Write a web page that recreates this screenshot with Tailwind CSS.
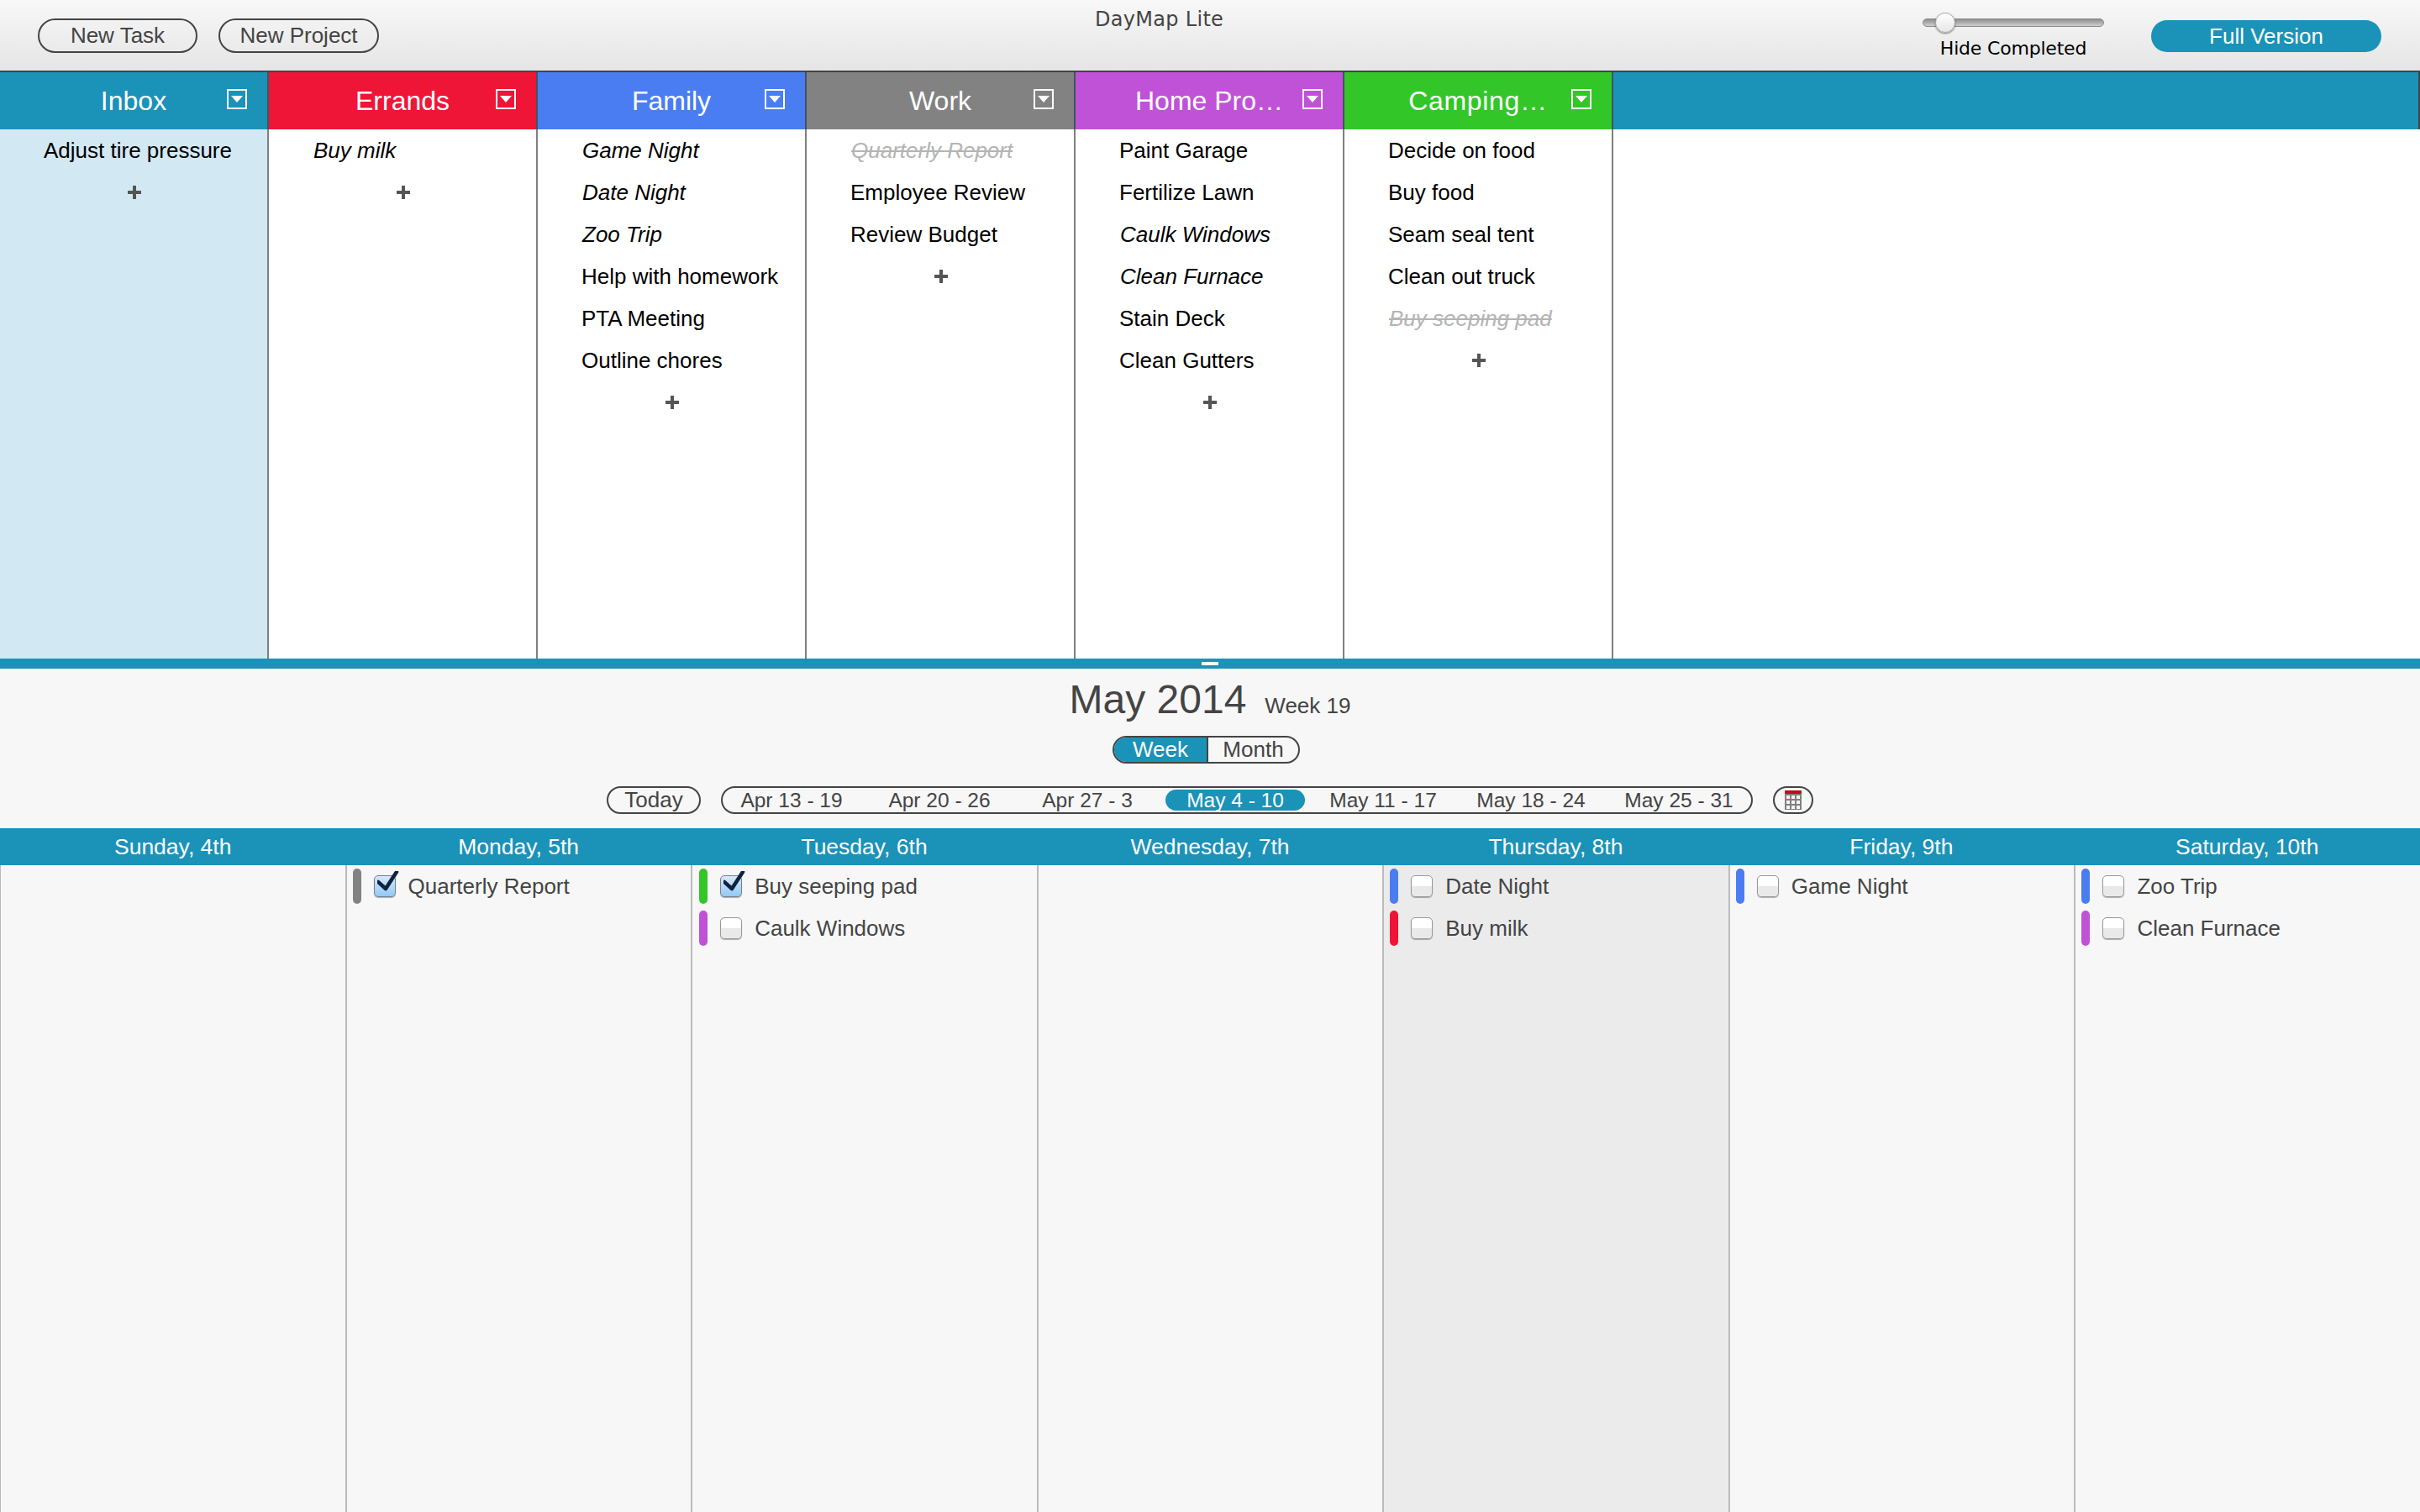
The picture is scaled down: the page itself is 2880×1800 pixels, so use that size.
<!DOCTYPE html>
<html>
<head>
<meta charset="utf-8">
<script src="https://cdn.jsdelivr.net/npm/@tailwindcss/browser@4"></script>
</head>
<body class="m-0">
<div class="w-[2880px] h-[1800px] overflow-hidden flex flex-col bg-[#f7f7f7] font-['Liberation_Sans',Arial,sans-serif] text-[26px]">

  <!-- Toolbar -->
  <div class="h-[86px] shrink-0 border-b-2 border-[#444] bg-gradient-to-b from-[#f8f8f8] to-[#e5e5e5] flex items-start pl-[45px]">
    <div class="flex gap-[25px] mt-[22px]">
      <div class="w-[190px] h-[41px] rounded-full border-2 border-[#444] flex items-center justify-center text-[26px] text-[#444]">New Task</div>
      <div class="w-[191px] h-[41px] rounded-full border-2 border-[#444] flex items-center justify-center text-[26px] text-[#444]">New Project</div>
    </div>
    <div class="ml-[852px] mt-[8px] w-[160px] text-[24px] leading-[30px] tracking-[0.3px] text-[#444] font-['DejaVu_Sans',sans-serif] whitespace-nowrap">DayMap Lite</div>
    <div class="ml-[825px] w-[216px] flex flex-col items-center pt-[22px]">
      <div class="relative w-[216px] h-[10px] rounded-full border border-[#8a8a8a] bg-gradient-to-b from-[#8f8f8f] to-[#cfcfcf]">
        <div class="absolute left-[14px] top-[-8px] w-[24px] h-[24px] rounded-full border border-[#aaa] bg-gradient-to-b from-[#fff] to-[#e6e6e6] shadow-[0_1px_2px_rgba(0,0,0,0.5)]"></div>
      </div>
      <div class="mt-[12px] text-[22px] leading-[28px] tracking-[-0.2px] text-black font-['DejaVu_Sans',sans-serif] whitespace-nowrap">Hide Completed</div>
    </div>
    <div class="ml-[56px] mt-[24px] w-[274px] h-[38px] rounded-full bg-[#1b92b8] flex items-center justify-center text-[26px] text-white">Full Version</div>
  </div>

  <!-- Project headers -->
  <div class="h-[68px] shrink-0 flex bg-[#1b92b8] border-r-2 border-[#444]">
    <div class="w-[320px] border-r-2 border-[#3d5660] bg-[#1b92b8] grid grid-cols-[1fr_auto_1fr] items-center text-[32px] text-white">
      <span></span><span>Inbox</span>
      <span class="justify-self-end mr-[24px] mb-[4px] w-[24px] h-[24px] border-2 border-white flex items-center justify-center"><svg width="14" height="8" viewBox="0 0 14 8"><path d="M0 0H14L7 8Z" fill="#fff"/></svg></span>
    </div>
    <div class="w-[320px] border-r-2 border-[#3d5660] bg-[#ee1537] grid grid-cols-[1fr_auto_1fr] items-center text-[32px] text-white">
      <span></span><span>Errands</span>
      <span class="justify-self-end mr-[24px] mb-[4px] w-[24px] h-[24px] border-2 border-white flex items-center justify-center"><svg width="14" height="8" viewBox="0 0 14 8"><path d="M0 0H14L7 8Z" fill="#fff"/></svg></span>
    </div>
    <div class="w-[320px] border-r-2 border-[#3d5660] bg-[#4a7df2] grid grid-cols-[1fr_auto_1fr] items-center text-[32px] text-white">
      <span></span><span>Family</span>
      <span class="justify-self-end mr-[24px] mb-[4px] w-[24px] h-[24px] border-2 border-white flex items-center justify-center"><svg width="14" height="8" viewBox="0 0 14 8"><path d="M0 0H14L7 8Z" fill="#fff"/></svg></span>
    </div>
    <div class="w-[320px] border-r-2 border-[#3d5660] bg-[#828282] grid grid-cols-[1fr_auto_1fr] items-center text-[32px] text-white">
      <span></span><span>Work</span>
      <span class="justify-self-end mr-[24px] mb-[4px] w-[24px] h-[24px] border-2 border-white flex items-center justify-center"><svg width="14" height="8" viewBox="0 0 14 8"><path d="M0 0H14L7 8Z" fill="#fff"/></svg></span>
    </div>
    <div class="w-[320px] border-r-2 border-[#3d5660] bg-[#bf52d6] grid grid-cols-[1fr_auto_1fr] items-center text-[32px] text-white">
      <span></span><span>Home Pro…</span>
      <span class="justify-self-end mr-[24px] mb-[4px] w-[24px] h-[24px] border-2 border-white flex items-center justify-center"><svg width="14" height="8" viewBox="0 0 14 8"><path d="M0 0H14L7 8Z" fill="#fff"/></svg></span>
    </div>
    <div class="w-[320px] border-r-2 border-[#3d5660] bg-[#32c628] grid grid-cols-[1fr_auto_1fr] items-center text-[32px] text-white">
      <span></span><span class="tracking-[0.7px]">Camping…</span>
      <span class="justify-self-end mr-[24px] mb-[4px] w-[24px] h-[24px] border-2 border-white flex items-center justify-center"><svg width="14" height="8" viewBox="0 0 14 8"><path d="M0 0H14L7 8Z" fill="#fff"/></svg></span>
    </div>
  </div>

  <!-- Project columns -->
  <div class="h-[630px] shrink-0 flex bg-white text-black leading-[50px]">
    <div class="w-[320px] border-r-2 border-[#808080] bg-[#d2e8f3] pl-[52px]">
      <div class="h-[50px]">Adjust tire pressure</div>
      <div class="h-[50px] -ml-[50px] flex items-center justify-center"><svg width="16" height="16" viewBox="0 0 16 16"><path d="M8 0V16M0 8H16" stroke="#555" stroke-width="4"/></svg></div>
    </div>
    <div class="w-[320px] border-r-2 border-[#808080] pl-[52px]">
      <div class="h-[50px] italic pl-[1px]">Buy milk</div>
      <div class="h-[50px] -ml-[50px] flex items-center justify-center"><svg width="16" height="16" viewBox="0 0 16 16"><path d="M8 0V16M0 8H16" stroke="#555" stroke-width="4"/></svg></div>
    </div>
    <div class="w-[320px] border-r-2 border-[#808080] pl-[52px]">
      <div class="h-[50px] italic pl-[1px]">Game Night</div>
      <div class="h-[50px] italic pl-[1px]">Date Night</div>
      <div class="h-[50px] italic pl-[1px]">Zoo Trip</div>
      <div class="h-[50px]">Help with homework</div>
      <div class="h-[50px]">PTA Meeting</div>
      <div class="h-[50px]">Outline chores</div>
      <div class="h-[50px] -ml-[50px] flex items-center justify-center"><svg width="16" height="16" viewBox="0 0 16 16"><path d="M8 0V16M0 8H16" stroke="#555" stroke-width="4"/></svg></div>
    </div>
    <div class="w-[320px] border-r-2 border-[#808080] pl-[52px]">
      <div class="h-[50px] italic line-through text-[#b4b4b4] pl-[1px]">Quarterly Report</div>
      <div class="h-[50px]">Employee Review</div>
      <div class="h-[50px]">Review Budget</div>
      <div class="h-[50px] -ml-[50px] flex items-center justify-center"><svg width="16" height="16" viewBox="0 0 16 16"><path d="M8 0V16M0 8H16" stroke="#555" stroke-width="4"/></svg></div>
    </div>
    <div class="w-[320px] border-r-2 border-[#808080] pl-[52px]">
      <div class="h-[50px]">Paint Garage</div>
      <div class="h-[50px]">Fertilize Lawn</div>
      <div class="h-[50px] italic pl-[1px]">Caulk Windows</div>
      <div class="h-[50px] italic pl-[1px]">Clean Furnace</div>
      <div class="h-[50px]">Stain Deck</div>
      <div class="h-[50px]">Clean Gutters</div>
      <div class="h-[50px] -ml-[50px] flex items-center justify-center"><svg width="16" height="16" viewBox="0 0 16 16"><path d="M8 0V16M0 8H16" stroke="#555" stroke-width="4"/></svg></div>
    </div>
    <div class="w-[320px] border-r-2 border-[#808080] pl-[52px]">
      <div class="h-[50px]">Decide on food</div>
      <div class="h-[50px]">Buy food</div>
      <div class="h-[50px]">Seam seal tent</div>
      <div class="h-[50px]">Clean out truck</div>
      <div class="h-[50px] italic line-through text-[#b4b4b4] pl-[1px]">Buy seeping pad</div>
      <div class="h-[50px] -ml-[50px] flex items-center justify-center"><svg width="16" height="16" viewBox="0 0 16 16"><path d="M8 0V16M0 8H16" stroke="#555" stroke-width="4"/></svg></div>
    </div>
  </div>

  <!-- Divider -->
  <div class="h-[12px] shrink-0 bg-[#1b92b8] flex justify-center pt-[4px]">
    <div class="w-[20px] h-[4px] bg-white"></div>
  </div>

  <!-- Calendar heading -->
  <div class="h-[190px] shrink-0 flex flex-col items-center text-[#444] pt-[9px]">
    <div class="h-[56px] flex items-baseline gap-[22px] leading-[56px] whitespace-nowrap">
      <span class="text-[48px]">May 2014</span>
      <span class="text-[26px]">Week 19</span>
    </div>
    <div class="mt-[15px] mr-[9px] h-[33px] w-[223px] rounded-full border-2 border-[#444] flex overflow-hidden leading-[29px]">
      <div class="w-[112px] bg-[#1b92b8] text-white text-center border-r-2 border-[#444]">Week</div>
      <div class="flex-1 text-center">Month</div>
    </div>
    <div class="mt-[27px] flex gap-[24px] h-[33px]">
      <div class="w-[112px] rounded-full border-2 border-[#444] text-center text-[26px] leading-[29px]">Today</div>
      <div class="w-[1228px] rounded-full border-2 border-[#444] flex text-[24.5px] leading-[29px] whitespace-nowrap">
        <div class="w-[170px] pr-[6px] text-center">Apr 13 - 19</div>
        <div class="w-[176px] text-center">Apr 20 - 26</div>
        <div class="w-[176px] text-center">Apr 27 - 3</div>
        <div class="w-[176px] px-[5px] py-[2px]"><div class="h-[25px] rounded-full bg-[#1b92b8] text-white text-center leading-[25px]">May 4 - 10</div></div>
        <div class="w-[176px] text-center">May 11 - 17</div>
        <div class="w-[176px] text-center">May 18 - 24</div>
        <div class="w-[174px] pl-[2px] text-center">May 25 - 31</div>
      </div>
      <div class="w-[48px] rounded-full border-2 border-[#444] flex items-center justify-center">
        <svg width="20" height="23" viewBox="0 0 20 23">
          <rect width="20" height="4" fill="#c00d1c"/>
          <rect y="4" width="20" height="19" fill="#808080"/>
          <path d="M2 6h4v4H2zM8 6h4v4H8zM14 6h4v4h-4zM2 12h4v4H2zM8 12h4v4H8zM14 12h4v4h-4zM2 18h4v4H2zM8 18h4v4H8zM14 18h4v4h-4z" fill="#f4f4f4"/>
        </svg>
      </div>
    </div>
  </div>

  <!-- Day headers -->
  <div class="h-[44px] shrink-0 grid grid-cols-7 bg-[#1b92b8] text-white text-center text-[26.5px] leading-[44px]">
    <div>Sunday, 4th</div><div>Monday, 5th</div><div>Tuesday, 6th</div><div>Wednesday, 7th</div><div>Thursday, 8th</div><div>Friday, 9th</div><div>Saturday, 10th</div>
  </div>

  <!-- Day columns -->
  <div class="flex-1 -ml-px grid grid-cols-7 text-[#444]">
    <div class="border-l-2 border-[#bbb]"></div>

    <div class="border-l-2 border-[#bbb] pl-[7px] pt-[4px] flex flex-col gap-[8px]">
      <div class="h-[42px] flex items-center">
        <div class="w-[10px] h-[42px] rounded-[5px] bg-[#828282]"></div>
        <div class="relative ml-[15px] w-[26px] h-[26px] rounded-[5px] border border-[#77808c] bg-gradient-to-b from-[#d6e9fb] to-[#93c9f4] shadow-[0_1px_1px_rgba(0,0,0,0.3)]">
          <svg class="absolute left-[3px] top-[-6px]" width="26" height="28" viewBox="0 0 26 28"><path d="M1 13L10 21L23 1" fill="none" stroke="#0d2340" stroke-width="4.5" stroke-linecap="round" stroke-linejoin="round"/></svg>
        </div>
        <span class="ml-[15px]">Quarterly Report</span>
      </div>
    </div>

    <div class="border-l-2 border-[#bbb] pl-[8px] pt-[4px] flex flex-col gap-[8px]">
      <div class="h-[42px] flex items-center">
        <div class="w-[10px] h-[42px] rounded-[5px] bg-[#32c628]"></div>
        <div class="relative ml-[15px] w-[26px] h-[26px] rounded-[5px] border border-[#77808c] bg-gradient-to-b from-[#d6e9fb] to-[#93c9f4] shadow-[0_1px_1px_rgba(0,0,0,0.3)]">
          <svg class="absolute left-[3px] top-[-6px]" width="26" height="28" viewBox="0 0 26 28"><path d="M1 13L10 21L23 1" fill="none" stroke="#0d2340" stroke-width="4.5" stroke-linecap="round" stroke-linejoin="round"/></svg>
        </div>
        <span class="ml-[15px]">Buy seeping pad</span>
      </div>
      <div class="h-[42px] flex items-center">
        <div class="w-[10px] h-[42px] rounded-[5px] bg-[#bf52d6]"></div>
        <div class="ml-[15px] w-[26px] h-[26px] rounded-[5px] border border-[#999] bg-gradient-to-b from-[#ffffff] from-50% to-[#e9e9e9] to-50% shadow-[0_1px_1px_rgba(0,0,0,0.3)]"></div>
        <span class="ml-[15px]">Caulk Windows</span>
      </div>
    </div>

    <div class="border-l-2 border-[#bbb]"></div>

    <div class="border-l-2 border-[#bbb] bg-[#ebebeb] pl-[7px] pt-[4px] flex flex-col gap-[8px]">
      <div class="h-[42px] flex items-center">
        <div class="w-[10px] h-[42px] rounded-[5px] bg-[#4a7df2]"></div>
        <div class="ml-[15px] w-[26px] h-[26px] rounded-[5px] border border-[#999] bg-gradient-to-b from-[#ffffff] from-50% to-[#e9e9e9] to-50% shadow-[0_1px_1px_rgba(0,0,0,0.3)]"></div>
        <span class="ml-[15px]">Date Night</span>
      </div>
      <div class="h-[42px] flex items-center">
        <div class="w-[10px] h-[42px] rounded-[5px] bg-[#ee1537]"></div>
        <div class="ml-[15px] w-[26px] h-[26px] rounded-[5px] border border-[#999] bg-gradient-to-b from-[#ffffff] from-50% to-[#e9e9e9] to-50% shadow-[0_1px_1px_rgba(0,0,0,0.3)]"></div>
        <span class="ml-[15px]">Buy milk</span>
      </div>
    </div>

    <div class="border-l-2 border-[#bbb] pl-[7px] pt-[4px] flex flex-col gap-[8px]">
      <div class="h-[42px] flex items-center">
        <div class="w-[10px] h-[42px] rounded-[5px] bg-[#4a7df2]"></div>
        <div class="ml-[15px] w-[26px] h-[26px] rounded-[5px] border border-[#999] bg-gradient-to-b from-[#ffffff] from-50% to-[#e9e9e9] to-50% shadow-[0_1px_1px_rgba(0,0,0,0.3)]"></div>
        <span class="ml-[15px]">Game Night</span>
      </div>
    </div>

    <div class="border-l-2 border-[#bbb] pl-[7px] pt-[4px] flex flex-col gap-[8px]">
      <div class="h-[42px] flex items-center">
        <div class="w-[10px] h-[42px] rounded-[5px] bg-[#4a7df2]"></div>
        <div class="ml-[15px] w-[26px] h-[26px] rounded-[5px] border border-[#999] bg-gradient-to-b from-[#ffffff] from-50% to-[#e9e9e9] to-50% shadow-[0_1px_1px_rgba(0,0,0,0.3)]"></div>
        <span class="ml-[15px]">Zoo Trip</span>
      </div>
      <div class="h-[42px] flex items-center">
        <div class="w-[10px] h-[42px] rounded-[5px] bg-[#bf52d6]"></div>
        <div class="ml-[15px] w-[26px] h-[26px] rounded-[5px] border border-[#999] bg-gradient-to-b from-[#ffffff] from-50% to-[#e9e9e9] to-50% shadow-[0_1px_1px_rgba(0,0,0,0.3)]"></div>
        <span class="ml-[15px]">Clean Furnace</span>
      </div>
    </div>
  </div>
</div>
</body>
</html>
